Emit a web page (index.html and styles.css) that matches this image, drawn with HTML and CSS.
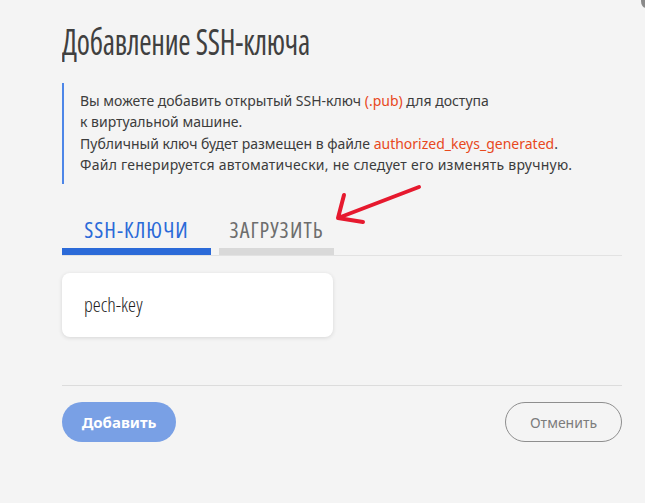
FILE: index.html
```html
<!DOCTYPE html>
<html lang="ru">
<head>
<meta charset="utf-8">
<link rel="stylesheet" href="styles.css">
</head>
<body>
<div class="modal">
  <h1 class="title"><span class="title-text">Добавление SSH-ключа</span></h1>
  <div class="info">
    <p>Вы можете добавить открытый SSH-ключ <span class="hl">(.pub)</span> для доступа<br>к виртуальной машине.</p>
    <p>Публичный ключ будет размещен в файле <span class="hl">authorized_keys_generated</span>.</p>
    <p class="wide">Файл генерируется автоматически, не следует его изменять вручную.</p>
  </div>
  <div class="tabs">
    <div class="tab active">SSH-КЛЮЧИ</div>
    <div class="tab upload">ЗАГРУЗИТЬ</div>
    <svg class="arrow" width="100" height="50" viewBox="0 0 100 50">
      <path d="M89 7 L8 38 M14 15 L8 38 L33 42" fill="none" stroke="#e6192e" stroke-width="4" stroke-linecap="round" stroke-linejoin="round"/>
    </svg>
  </div>
  <div class="keys">
    <div class="key-card">pech-key</div>
  </div>
  <div class="footer">
    <button class="btn primary">Добавить</button>
    <button class="btn secondary">Отменить</button>
  </div>
</div>
<div class="corner"></div>
</body>
</html>
```
FILE: styles.css
```css
html, body {
  margin: 0;
  padding: 0;
  background: #f4f4f4;
  height: 100%;
}
body {
  font-family: "Noto Sans", "Open Sans", sans-serif;
  color: #333;
  overflow: hidden;
  position: relative;
}
.modal {
  padding: 20px 23px 0 62px;
}
.title {
  margin: 0;
  font-family: "Open Sans", sans-serif;
  font-stretch: 75%;
  font-weight: 500;
  font-size: 36px;
  line-height: 44px;
  color: #404040;
  letter-spacing: -0.3px;
}
.title-text {
  display: inline-block;
  transform: scaleX(0.83);
  transform-origin: left center;
  white-space: nowrap;
}
.info {
  margin-top: 19px;
  border-left: 2px solid #4d86e8;
  padding: 7px 0 9px 16px;
  font-size: 14px;
  line-height: 21.3px;
  color: #3c3c3c;
}
.info p {
  margin: 0;
}
.info p.wide {
  letter-spacing: 0.25px;
}
.hl {
  color: #e8481c;
}
.tabs {
  position: relative;
  display: flex;
  gap: 8px;
  margin-top: 26px;
  border-bottom: 1px solid #e2e2e2;
}
.tab {
  font-family: "Open Sans", sans-serif;
  font-stretch: 75%;
  font-size: 22px;
  letter-spacing: 1px;
  text-align: center;
  height: 38px;
  line-height: 38px;
  border-bottom: 7px solid transparent;
}
.tab.active {
  width: 149px;
  color: #2b6ad8;
  border-bottom-color: #2b6ad8;
}
.tab.upload {
  width: 115px;
  color: #6d6d6d;
  border-bottom-color: #d9d9d9;
}
.arrow {
  position: absolute;
  left: 268px;
  top: -30px;
}
.keys {
  padding: 17px 0 48px;
  border-bottom: 1px solid #dcdcdc;
}
.key-card {
  width: 249px;
  height: 64px;
  line-height: 64px;
  padding-left: 22px;
  background: #fff;
  border-radius: 8px;
  box-shadow: 0 1px 4px rgba(0,0,0,0.12);
  font-family: "Open Sans", sans-serif;
  font-stretch: 75%;
  font-weight: 360;
  font-size: 20px;
  color: #1e1e1e;
}
.footer {
  display: flex;
  justify-content: space-between;
  padding-top: 16px;
}
.btn {
  height: 40px;
  border-radius: 20px;
  font-family: "Noto Sans", sans-serif;
  font-size: 14px;
  cursor: pointer;
}
.btn.primary {
  width: 114px;
  background: #79a0e5;
  border: none;
  color: #fff;
  font-weight: bold;
  font-size: 15px;
}
.btn.secondary {
  width: 117px;
  background: transparent;
  border: 1.5px solid #8e8e8e;
  color: #7c7c7c;
}
.corner {
  position: absolute;
  right: -6px;
  top: -6px;
  width: 10px;
  height: 14px;
  border-radius: 50%;
  background: #8a8a8a;
}
```
